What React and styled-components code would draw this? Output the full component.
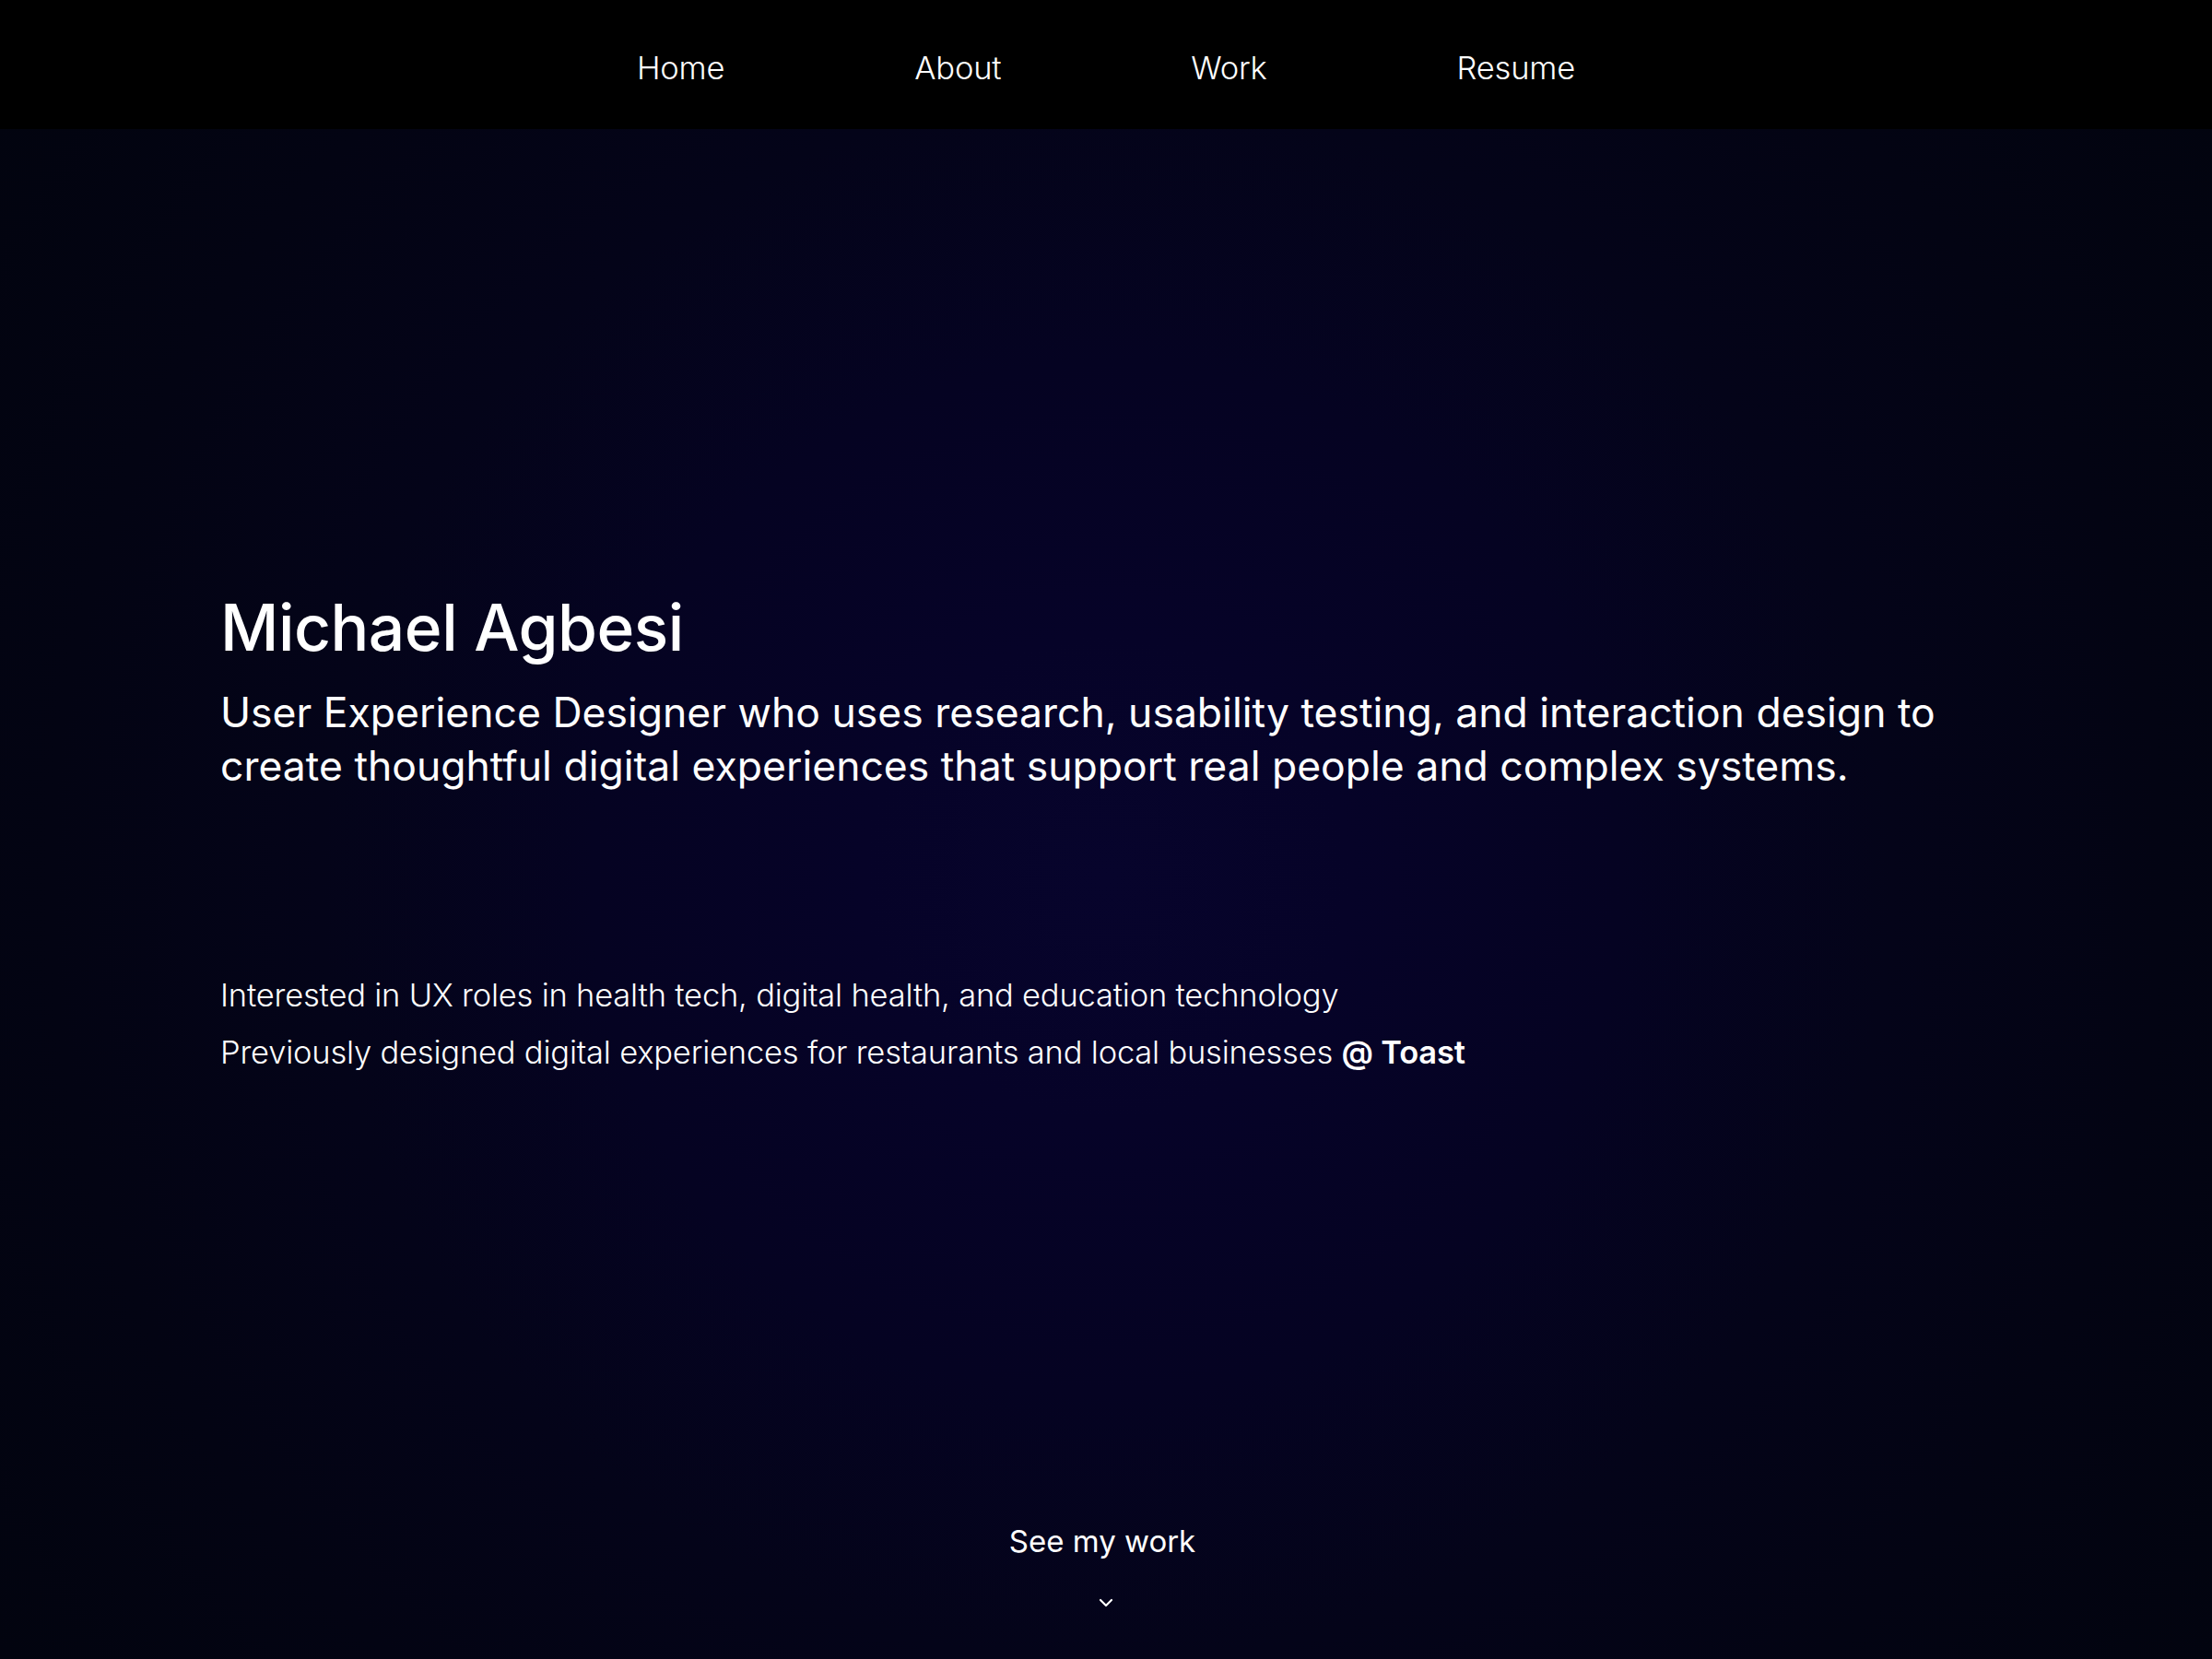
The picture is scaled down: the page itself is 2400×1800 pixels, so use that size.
import React from "react";
import styled, { createGlobalStyle } from "styled-components";

const Global = createGlobalStyle`
  html, body { margin: 0; padding: 0; background: #02040f; }
  body { font-family: "Inter", "Liberation Sans", sans-serif; color: #fff; }
  * { box-sizing: border-box; }
`;

const Page = styled.div`
  min-height: 100vh;
  display: flex;
  flex-direction: column;
`;

const NavBar = styled.nav`
  height: 140px;
  background: #000;
  display: flex;
  justify-content: center;
  align-items: center;
  gap: 206px;
  padding-top: 6px;
`;

const NavLink = styled.a`
  font-size: 34.5px;
  font-weight: 300;
  color: #fff;
  text-decoration: none;
  letter-spacing: -0.2px;
`;

const Hero = styled.main`
  flex: 1;
  display: flex;
  flex-direction: column;
  background: radial-gradient(
    circle at 50% 49%,
    #07042c 0%,
    #060328 18%,
    #050322 38%,
    #040419 58%,
    #030413 78%,
    #02040f 100%
  );
`;

const Content = styled.section`
  padding: 500px 10% 0 239px;
`;

const Name = styled.h1`
  margin: 0;
  font-size: 69.5px;
  line-height: 82px;
  font-weight: 500;
  letter-spacing: -0.5px;
`;

const Tagline = styled.p`
  margin: 22px 0 0;
  font-size: 44.5px;
  line-height: 58px;
  font-weight: 400;
`;

const Details = styled.div`
  margin-top: 189px;
  display: flex;
  flex-direction: column;
`;

const Detail = styled.p`
  margin: 0;
  font-size: 34.5px;
  line-height: 62px;
  font-weight: 300;
  letter-spacing: -0.2px;
`;

const Strong = styled.strong`
  font-weight: 600;
`;

const Cue = styled.a`
  margin-top: auto;
  padding-bottom: 51px;
  display: flex;
  flex-direction: column;
  align-items: center;
  gap: 37px;
  color: #fff;
  text-decoration: none;
`;

const CueLabel = styled.span`
  font-size: 33px;
  line-height: 40px;
  font-weight: 400;
  margin-right: 8px;
`;

const Chevron = () => (
  <svg width="20" height="20" viewBox="0 0 20 20" fill="none">
    <path d="M4 7l6 6 6-6" stroke="#fff" strokeWidth="2.2" strokeLinecap="round" strokeLinejoin="round" />
  </svg>
);

export default function App() {
  return (
    <Page>
      <Global />
      <NavBar>
        <NavLink href="#">Home</NavLink>
        <NavLink href="#">About</NavLink>
        <NavLink href="#">Work</NavLink>
        <NavLink href="#">Resume</NavLink>
      </NavBar>
      <Hero>
        <Content>
          <Name>Michael Agbesi</Name>
          <Tagline>
            User Experience Designer who uses research, usability testing, and interaction design to create
            thoughtful digital experiences that support real people and complex systems.
          </Tagline>
          <Details>
            <Detail>Interested in UX roles in health tech, digital health, and education technology</Detail>
            <Detail>
              Previously designed digital experiences for restaurants and local businesses <Strong>@ Toast</Strong>
            </Detail>
          </Details>
        </Content>
        <Cue href="#">
          <CueLabel>See my work</CueLabel>
          <Chevron />
        </Cue>
      </Hero>
    </Page>
  );
}
